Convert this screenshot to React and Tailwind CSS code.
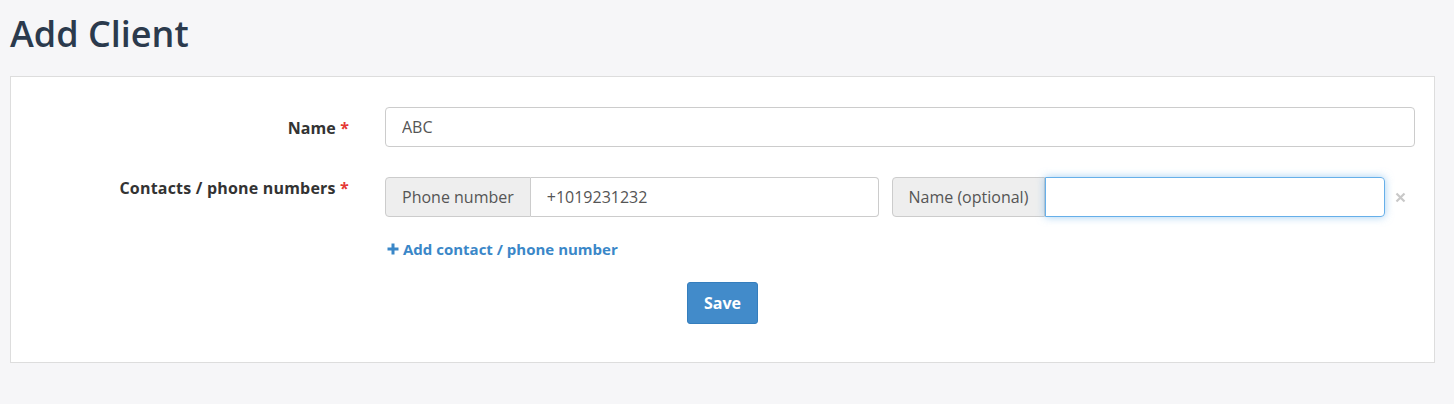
import React, { useState } from 'react';

const font = { fontFamily: '"Open Sans", "Liberation Sans", sans-serif' };

export default function App() {
  const [form, setForm] = useState({ name: 'ABC', phone: '+1019231232', contactName: '' });

  const handleChange = (e) => {
    setForm({ ...form, [e.target.name]: e.target.value });
  };

  return (
    <div className="min-h-screen w-full bg-[#f6f6f8] pl-[10px] pr-[19px] pt-[10px]" style={font}>
      <h1 className="text-[36px] font-semibold leading-[48px] text-[#2b3a4d] mb-[18px]">Add Client</h1>

      <div className="bg-white border border-[#dddddd] pt-[30px] pb-[38px] pr-[19px]">
        <div className="flex items-center">
          <label className="w-[338px] shrink-0 text-right text-[16px] font-bold text-[#333333] leading-[22px] pt-[2px] tracking-[0.1px]">
            Name <span className="text-[#e53935]">*</span>
          </label>
          <div className="ml-[36px] flex-1">
            <input
              name="name"
              value={form.name}
              onChange={handleChange}
              className="w-full h-[40px] px-[16px] text-[16px] text-[#555555] border border-[#cccccc] rounded-[4px] focus:outline-none"
            />
          </div>
        </div>

        <div className="flex items-start mt-[30px]">
          <label className="w-[338px] shrink-0 text-right text-[16px] font-bold text-[#333333] leading-[22px] tracking-[0.2px]">
            Contacts / phone numbers <span className="text-[#e53935]">*</span>
          </label>
          <div className="ml-[36px] flex-1">
            <div className="flex items-center">
              <div className="flex flex-1 h-[40px]">
                <span className="flex items-center px-[16px] bg-[#eeeeee] border border-[#cccccc] rounded-l-[4px] text-[16px] text-[#555555] whitespace-nowrap">
                  Phone number
                </span>
                <input
                  name="phone"
                  value={form.phone}
                  onChange={handleChange}
                  className="flex-1 min-w-0 px-[16px] text-[16px] text-[#555555] border border-l-0 border-[#cccccc] rounded-r-[4px] focus:outline-none"
                />
              </div>
              <div className="flex flex-1 h-[40px] ml-[13px]">
                <span className="flex items-center px-[16px] bg-[#eeeeee] border border-[#cccccc] rounded-l-[4px] text-[16px] text-[#555555] whitespace-nowrap">
                  Name (optional)
                </span>
                <input
                  name="contactName"
                  value={form.contactName}
                  onChange={handleChange}
                  className="flex-1 min-w-0 px-[16px] text-[16px] text-[#555555] border border-[#66afe9] rounded-r-[4px] shadow-[0_0_8px_rgba(102,175,233,0.6)] focus:outline-none"
                />
              </div>
              <button className="w-[30px] shrink-0 flex justify-center text-[#c8c8c8]">
                <svg width="11" height="11" viewBox="0 0 11 11">
                  <path d="M1.5 1.5 L9.5 9.5 M9.5 1.5 L1.5 9.5" stroke="currentColor" strokeWidth="2.2" />
                </svg>
              </button>
            </div>

            <a href="#" className="inline-flex items-center mt-[22px] ml-[2px] text-[15px] font-bold text-[#3a87c8] leading-[20px]">
              <svg width="12" height="12" viewBox="0 0 12 12" className="mr-[4px]">
                <path d="M6 0.5 V11.5 M0.5 6 H11.5" stroke="currentColor" strokeWidth="3" />
              </svg>
              Add contact / phone number
            </a>
          </div>
        </div>

        <div className="flex justify-center mt-[21px] pl-[19px]">
          <button className="h-[42px] px-[16px] bg-[#428bca] border border-[#357ebd] rounded-[3px] text-white text-[16px] font-bold">
            Save
          </button>
        </div>
      </div>
    </div>
  );
}
